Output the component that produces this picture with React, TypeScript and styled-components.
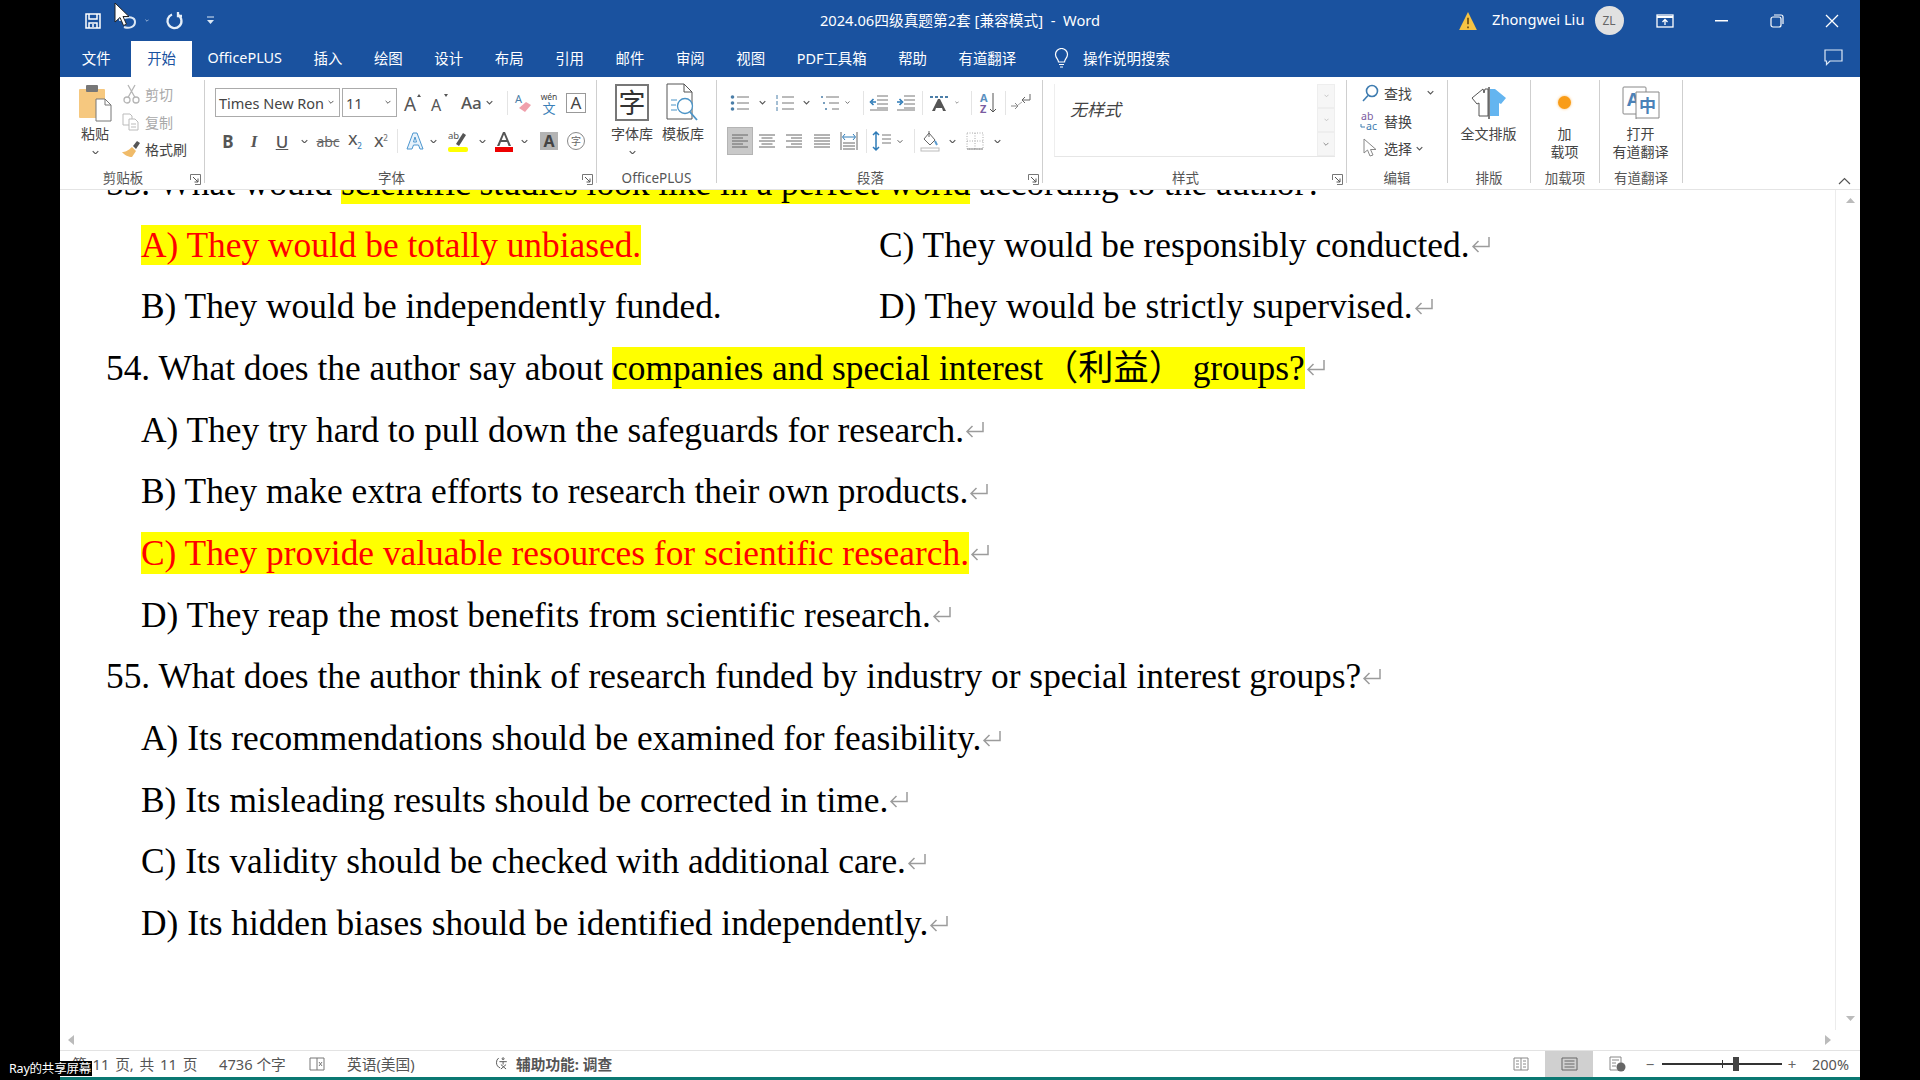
import React from "react";
import styled, { createGlobalStyle } from "styled-components";

const Global = createGlobalStyle`
  html, body { margin: 0; padding: 0; background: #000; }
  * { box-sizing: border-box; }
`;

const UI = `"Noto Sans", "Noto Sans CJK SC", sans-serif`;
const BLUE = "#1a529f";

const Screen = styled.div`
  position: relative; width: 1920px; height: 1080px; background: #000; padding: 0 60px;
  overflow: hidden; font-family: ${UI}; color: #444;
`;
const Win = styled.div`display: flex; flex-direction: column; width: 1800px; height: 1080px; background: #fff;`;

const TitleBar = styled.div`display: flex; align-items: center; height: 41px; background: ${BLUE}; color: #fff;`;
const Qat = styled.div`display: flex; align-items: center; width: 400px; padding-left: 15px;`;
const Title = styled.div`flex: 1; text-align: center; font-size: 14.7px; white-space: nowrap; padding-bottom: 3px;`;
const WinRight = styled.div`display: flex; align-items: center; width: 404px; margin-left: -4px; justify-content: flex-end;`;
const Cell = styled.div<{ $w: number; $h?: number }>`
  display: flex; align-items: center; justify-content: center; flex: none;
  width: ${p => p.$w}px; height: ${p => p.$h ?? 26}px;
`;
const Who = styled.div`font-size: 14.7px; white-space: nowrap; width: 114.5px; padding-left: 12px; padding-bottom: 3px;`;
const Avatar = styled.div`
  width: 29px; height: 29px; border-radius: 50%; background: #e1e1e1; color: #666; font-size: 12px;
  display: flex; align-items: center; justify-content: center; flex: none; margin-right: 18.5px;
`;

const TabBar = styled.div`display: flex; align-items: stretch; height: 36px; background: ${BLUE}; color: #fff; padding-left: 6px;`;
const Tab = styled.div<{ $on?: boolean; $gap?: number }>`
  display: flex; align-items: center; padding: 0 15.8px 3px; font-size: 14.4px; white-space: nowrap;
  margin-right: ${p => p.$gap ?? 0}px;
  background: ${p => (p.$on ? "#fff" : "transparent")};
  color: ${p => (p.$on ? BLUE : "#fff")};
`;
const Search = styled.div`display: flex; align-items: center; gap: 14px; margin-left: 22px; padding-bottom: 3px; font-size: 14.5px;`;
const TabEnd = styled.div`margin-left: auto; width: 36px; display: flex; align-items: center; padding-bottom: 3px;`;

const Ribbon = styled.div`
  display: flex; height: 113px; padding: 3px 0 6px; background: #fff; border-bottom: 1px solid #e4e4e4; position: relative; z-index: 2;
`;
const Group = styled.div<{ $w: number }>`
  display: flex; flex-direction: column; flex: none; width: ${p => p.$w}px; border-right: 1.5px solid #cfcfcf;
`;
const Body = styled.div<{ $pl?: number }>`display: flex; height: 90px; padding-left: ${p => p.$pl ?? 0}px;`;
const Stack = styled.div<{ $pl?: number; $pt?: number; $ml?: number; $mt?: number }>`
  display: flex; flex-direction: column; padding-left: ${p => p.$pl ?? 0}px; padding-top: ${p => p.$pt ?? 0}px;
  margin-left: ${p => p.$ml ?? 0}px; margin-top: ${p => p.$mt ?? 0}px;
`;
const GLabel = styled.div`display: flex; height: 13px; font-size: 13.5px; line-height: 16px; color: #555; align-items: center;`;
const GText = styled.div`flex: 1; text-align: center; white-space: nowrap; margin-top: 2px;`;
const Launch = styled.div`width: 18px; display: flex; justify-content: center; margin-top: 5px;`;

const Big = styled.div<{ $w: number }>`
  display: flex; flex-direction: column; align-items: center; flex: none; width: ${p => p.$w}px;
  font-size: 14px; line-height: 18px; color: #444; white-space: nowrap; text-align: center;
`;
const BigIcon = styled.div`height: 45px; display: flex; align-items: center; justify-content: center;`;
const ChevLine = styled.div`height: 18px; display: flex; align-items: center;`;
const Small = styled.div<{ $off?: boolean }>`
  display: flex; align-items: center; height: 27.7px; font-size: 14px; white-space: nowrap; gap: 4px;
  color: ${p => (p.$off ? "#a9a9a9" : "#444")};
`;
const SmallIco = styled.div`width: 20px; display: flex; justify-content: center; flex: none;`;

const Row = styled.div<{ $h: number; $pl?: number }>`
  display: flex; align-items: center; height: ${p => p.$h}px; padding-left: ${p => p.$pl ?? 0}px;
`;
const Combo = styled.div<{ $w: number }>`
  display: flex; align-items: center; justify-content: space-between; flex: none; width: ${p => p.$w}px; height: 29px;
  border: 1px solid #ababab; padding: 0 5px 0 3px; font-size: 14.5px; color: #444; margin-right: 2px; white-space: nowrap; overflow: hidden;
`;
const TB = styled.span<{ $b?: boolean; $i?: boolean; $u?: boolean; $s?: number }>`
  font-family: ${p => (p.$i ? `"Liberation Serif", serif` : UI)};
  font-weight: ${p => (p.$b || p.$i ? 700 : 500)}; font-style: ${p => (p.$i ? "italic" : "normal")};
  text-decoration: ${p => (p.$u ? "underline" : "none")}; font-size: ${p => p.$s ?? 16}px; color: #555; line-height: 1;
`;
const Sup = styled.sup`font-size: 8px; color: #777;`;
const Sub = styled.sub`font-size: 8px; color: #3a7fb8;`;
const Sep = styled.div<{ $ml?: number; $mr?: number }>`
  width: 1px; height: 24px; background: #e4e4e4; flex: none; margin-left: ${p => p.$ml ?? 0}px; margin-right: ${p => p.$mr ?? 0}px;
`;
const Pressed = styled(Cell)`background: #c9c9c9; border: 1px solid #b4b4b4;`;

const Gallery = styled.div`
  display: flex; width: 281px; height: 73px; margin-top: 4px; border-bottom: 1px solid #e6e6e6; border-left: 1px solid #eee;
`;
const Style0 = styled.div`flex: 1; padding: 12px 0 0 15px; font-size: 17px; font-style: italic; color: #444;`;
const Scroller = styled.div`width: 18px; display: flex; flex-direction: column; background: #f6f6f6;`;
const ScrollCell = styled.div`flex: 1; display: flex; align-items: center; justify-content: center; border: 1px solid #eee; color: #aaa;`;
const Collapse = styled.div`margin-left: auto; margin-top: 97px; width: 22px; display: flex; justify-content: flex-start;`;

const Doc = styled.div`flex: 1; display: flex; overflow: hidden; min-height: 0;`;
const Page = styled.div`
  flex: 1; overflow: hidden; padding-left: 46px;
  font-family: "Liberation Serif", serif; font-size: 35.37px; color: #000; white-space: nowrap;
`;
const Line = styled.div<{ $opt?: boolean; $first?: boolean }>`
  display: flex; align-items: center; height: 61.7px; padding-left: ${p => (p.$opt ? 35 : 0)}px;
  margin-top: ${p => (p.$first ? -38 : 0)}px;
`;
const Col = styled.div`width: 738px; flex: none;`;
const Mark = styled.mark`background: #ff0; color: inherit;`;
const Red = styled.mark`background: #ff0; color: #f00;`;
const Cjk = styled.span`font-family: "Noto Sans CJK SC", serif; font-size: 35.2px; line-height: 1;`;
const RetSvg = styled.svg`flex: none; margin-left: 1px;`;
const Ret = () => (
  <RetSvg width="19" height="17" viewBox="0 0 19 17" fill="none" stroke="#9c9c9c" strokeWidth="1.500">
    <path d="M18 1v9.500H2M7.500 5L2 10.500 7.500 16" />
  </RetSvg>
);
const VBar = styled.div`
  width: 25px; display: flex; flex-direction: column; justify-content: space-between; align-items: center;
  border-left: 1px solid #ececec; padding: 7px 0 5px 4px;
`;
const HBar = styled.div`display: flex; align-items: center; justify-content: space-between; height: 20px; padding: 0 27px 0 7px;`;
const Status = styled.div`
  display: flex; align-items: center; height: 27px; border-top: 1px solid #e3e3e3; font-size: 14.7px; color: #555; padding: 0 0 1px 12px; white-space: nowrap;
`;
const StatText = styled.span<{ $w?: number; $b?: boolean; $pl?: number; $ws?: number }>`
  flex: none; width: ${p => (p.$w ? p.$w + "px" : "auto")}; font-weight: ${p => (p.$b ? 700 : 400)}; padding: 0 0 1px ${p => p.$pl ?? 0}px;
  word-spacing: ${p => p.$ws ?? 0}px;
`;
const Spacer = styled.div`flex: 1;`;
const ViewOn = styled(Cell)`background: #d0d0d0;`;
const Zoom = styled.div`display: flex; align-items: center; width: 120px; height: 2px; background: #333; position: relative; flex: none; margin: 0 1px 0 3px;`;
const ZoomTick = styled.div`position: absolute; left: 60px; top: -3px; width: 1px; height: 8px; background: #333;`;
const ZoomThumb = styled.div`position: absolute; left: 71px; top: -6px; width: 6px; height: 14px; background: #444;`;
const ZoomMark = styled.span`width: 18px; text-align: center; font-size: 15px; flex: none; color: #666;`;
const Pct = styled.span`width: 59px; padding-left: 11px; font-size: 14.5px;`;
const Teal = styled.div`height: 3px; background: #0b7872;`;
const Badge = styled.div`
  position: absolute; left: 0; top: 1061px; width: 92px; height: 15px; background: #000; color: #fff; font-size: 12.5px;
  line-height: 15px; padding-left: 9px; white-space: nowrap; letter-spacing: -0.2px;
`;
const Pointer = styled.svg`position: absolute; left: 114px; top: 2px;`;

const Chev = ({ c = "#555", s = 7 }: { c?: string; s?: number }) => (
  <svg width={s} height={s * 0.7} viewBox="0 0 10 7"><path d="M1 1.5l4 4 4-4" fill="none" stroke={c} strokeWidth="1.6" /></svg>
);
const Launcher = () => (
  <svg width="11" height="11" viewBox="0 0 11 11"><path d="M.5 6V.5H10.5V10.5H5" fill="none" stroke="#777" /><path d="M3 3l5 5M8 4.5V8H4.5" fill="none" stroke="#555" /></svg>
);
const Lines = ({ kind }: { kind: "l" | "c" | "r" | "j" }) => {
  const w = [16, 11, 16, 11, 16];
  return (
    <svg width="18" height="16" viewBox="0 0 18 16">
      {w.map((x, i) => {
        const len = kind === "j" ? 16 : x;
        const sx = kind === "l" || kind === "j" ? 1 : kind === "c" ? 9 - len / 2 : 17 - len;
        return <path key={i} d={`M${sx} ${2 + i * 3}h${len}`} stroke="#666" />;
      })}
    </svg>
  );
};
const List = ({ mark }: { mark: "dot" | "num" | "multi" }) => (
  <svg width="20" height="18" viewBox="0 0 20 18">
    {[3, 9, 15].map((y, i) => (
      <g key={y}>
        {mark === "dot" && <circle cx="2.5" cy={y} r="1.8" fill="#4b7ea8" />}
        {mark === "num" && <path d={`M2 ${y - 2}v4`} stroke="#4b7ea8" />}
        {mark === "multi" && <circle cx={2 + i * 2} cy={y} r="1" fill="#4b7ea8" />}
        <path d={`M${mark === "multi" ? 6 + i * 3 : 7} ${y}H19`} stroke="#777" />
      </g>
    ))}
  </svg>
);
const Indent = ({ flip }: { flip?: boolean }) => (
  <svg width="20" height="18" viewBox="0 0 20 18">
    {[2, 6, 10, 14].map(y => <path key={y} d={`M8 ${y}H19`} stroke="#777" />)}
    <path d="M1 16H19" stroke="#777" />
    <path d={flip ? "M1 8h4M3.5 5l3 3-3 3" : "M7 8H3M4.5 5l-3 3 3 3"} fill="none" stroke="#2f7cb8" strokeWidth="1.6" />
  </svg>
);

const Paste = () => (
  <svg width="34" height="38" viewBox="0 0 34 38">
    <rect x="1" y="5" width="26" height="29" rx="1" fill="#f6c87f" />
    <rect x="8" y="1" width="12" height="7" rx="1" fill="#777" />
    <path d="M18 15h9l6 6v16H18z" fill="#fff" stroke="#777" />
    <path d="M27 15v6h6" fill="none" stroke="#777" />
  </svg>
);
const Scissors = () => (
  <svg width="17" height="20" viewBox="0 0 17 20" fill="none" stroke="#b5b5b5" strokeWidth="1.3">
    <circle cx="4" cy="16" r="3" /><circle cx="13" cy="16" r="3" /><path d="M5 13.5L12 1M12 13.5L5 1" />
  </svg>
);
const CopyIco = () => (
  <svg width="18" height="18" viewBox="0 0 18 18" fill="none" stroke="#bbb"><path d="M1 1h7l2 2v9H1z" /><path d="M7 6h6l3 3v8H7z" fill="#fff" /><path d="M9 11h5M9 14h5" /></svg>
);
const Brush = () => (
  <svg width="20" height="18" viewBox="0 0 20 18"><path d="M11 7l4 4-4 6c-3 0-8-2-10-5 3 0 6-1 10-5z" fill="#f0bb69" /><path d="M12 6l4-5 3 2-4 6z" fill="#555" /></svg>
);
const Eraser = () => (
  <svg width="18" height="20" viewBox="0 0 18 20"><text x="1" y="10" fontSize="11" fill="#4b7ea8" fontFamily="Noto Sans">A</text><path d="M5 15l7-6 5 3-6 7z" fill="#f0a0ac" /></svg>
);
const Wen = () => (
  <svg width="20" height="24" viewBox="0 0 20 24"><text x="10" y="9" fontSize="8.5" fill="#444" textAnchor="middle" fontFamily="Noto Sans">wén</text><text x="10" y="22" fontSize="13" fill="#3a7fb8" textAnchor="middle" fontFamily="Noto Sans CJK SC">文</text></svg>
);
const BoxA = styled.div`
  width: 20px; height: 20px; border: 1px solid #999; font-size: 17px; line-height: 18px; text-align: center; color: #444;
`;
const ABig = ({ up }: { up?: boolean }) => (
  <svg width="19" height="20" viewBox="0 0 19 20">
    <text x="1" y="18" fontSize={up ? 19 : 16} fill="#555" fontFamily="Noto Sans">A</text>
    <path d={up ? "M14 4l2-3 2 3z" : "M14 1l2 3 2-3z"} fill="#555" />
  </svg>
);
const Strike = styled.span`font-size: 14px; color: #666; text-decoration: line-through;`;
const AOutline = () => (
  <svg width="18" height="20" viewBox="0 0 18 20"><path d="M1 18L7 2h4l6 16h-3l-1.5-4h-5L6 18zM7.5 11h3L9 6z" fill="#e7f2fb" stroke="#4c96cf" /></svg>
);
const Highlight = () => (
  <svg width="20" height="22" viewBox="0 0 20 22">
    <text x="0" y="9" fontSize="9.5" fill="#555" fontFamily="Noto Sans">ab</text>
    <path d="M8 14l7-11 3 2-7 11z" fill="#555" /><rect x="0" y="17" width="20" height="5" rx="2" fill="#ff0" />
  </svg>
);
const FontColor = () => (
  <svg width="20" height="21" viewBox="0 0 20 21">
    <path d="M3 15L9 1h2l6 14h-2.400l-1.500-4H6.900l-1.500 4zM7.700 9h4.600L10 3.500z" fill="#555" /><rect x="1" y="16" width="18" height="5" fill="#e00" />
  </svg>
);
const AShade = styled.div`width: 18px; height: 18px; background: #b4b4b4; color: #444; font-weight: 700; font-size: 16px; line-height: 18px; text-align: center;`;
const CircleChar = styled.div`
  width: 18px; height: 18px; border: 1px solid #888; border-radius: 50%; font-size: 10px; line-height: 16px; text-align: center; color: #666; flex: none;
`;
const ZiBox = styled.div`
  width: 34px; height: 37px; border: 2px solid #777; background: #fff; font-size: 27px; line-height: 32px; text-align: center; color: #333;
  font-family: "Noto Sans CJK SC", serif;
`;
const Tmpl = () => (
  <svg width="36" height="39" viewBox="0 0 36 39" fill="none">
    <path d="M2 1h17l8 8v27H2z" stroke="#555" fill="#fff" /><path d="M19 1v8h8" stroke="#555" />
    <circle cx="20" cy="23" r="7.500" stroke="#4b94c7" strokeWidth="1.300" fill="#fff" />
    <path d="M25 29l7 8" stroke="#4b94c7" strokeWidth="1.800" />
    <path d="M6 17h6M6 22h5M6 27h6" stroke="#4b94c7" />
  </svg>
);
const Dir = () => (
  <svg width="22" height="18" viewBox="0 0 22 18"><path d="M2 3h18" stroke="#4b7ea8" strokeDasharray="3 2" strokeWidth="2" /><path d="M4 17L10 5h2l6 12h-3l-1-3H8l-1 3z" fill="#555" /></svg>
);
const Sort = () => (
  <svg width="20" height="24" viewBox="0 0 20 24">
    <text x="1" y="11" fontSize="11" fontWeight="700" fill="#5a8fc0" fontFamily="Noto Sans">A</text>
    <text x="1" y="22" fontSize="11" fontWeight="700" fill="#7a5ca0" fontFamily="Noto Sans">Z</text>
    <path d="M14 2v19M11 18l3 3 3-3" fill="none" stroke="#555" />
  </svg>
);
const Rtl = () => (
  <svg width="22" height="20" viewBox="0 0 22 20" fill="none"><path d="M20 1v6H12M15 4l-3 3 3 3" stroke="#666" /><path d="M1 13h6M5 10l3 3-3 3" stroke="#888" /><path d="M8 12l4-3" stroke="#aaa" /></svg>
);
const Dist = () => (
  <svg width="18" height="20" viewBox="0 0 18 20"><path d="M1 1v18M17 1v18M3 12h12M3 15h12M3 18h12" stroke="#666" /><path d="M3 6h12M5 3L2.500 6 5 9M13 3l2.500 3L13 9" fill="none" stroke="#2f7cb8" /></svg>
);
const Spacing = () => (
  <svg width="20" height="22" viewBox="0 0 20 22"><path d="M4 2v18M1 5l3-3 3 3M1 17l3 3 3-3" fill="none" stroke="#2f7cb8" strokeWidth="1.500" /><path d="M10 5h9M10 9h9M10 13h9" stroke="#777" /></svg>
);
const Bucket = () => (
  <svg width="20" height="22" viewBox="0 0 20 22"><path d="M9 3l6 7-5 5-6-6z" fill="#fff" stroke="#666" /><path d="M9 1v6" stroke="#666" /><path d="M15 11l2 4" stroke="#5a9bd0" strokeWidth="2" /><rect x="1" y="18" width="18" height="3" fill="#fff" stroke="#bbb" /></svg>
);
const Borders = () => (
  <svg width="18" height="18" viewBox="0 0 18 18"><rect x="1" y="1" width="16" height="16" fill="none" stroke="#aaa" strokeDasharray="1 1.500" /><path d="M9 1v16M1 9h16" stroke="#aaa" strokeDasharray="1 1.500" /><path d="M1 17h16" stroke="#888" /></svg>
);
const Loupe = () => (
  <svg width="17" height="18" viewBox="0 0 17 18" fill="none" stroke="#3e7cb0" strokeWidth="1.600"><circle cx="10" cy="7" r="5.500" /><path d="M6 11.500L1 17" /></svg>
);
const Replace = () => (
  <svg width="20" height="20" viewBox="0 0 20 20">
    <text x="1" y="9" fontSize="10.500" fill="#7a5ca0" fontFamily="Noto Sans">ab</text>
    <text x="6" y="19" fontSize="10.500" fill="#3e7cb0" fontFamily="Noto Sans">ac</text>
    <path d="M1 13v3h4" fill="none" stroke="#3e7cb0" />
  </svg>
);
const SelectIco = () => (
  <svg width="14" height="20" viewBox="0 0 14 20"><path d="M1 1v14l3.500-3L7 18l3-1-2.500-5.500H13z" fill="#fff" stroke="#888" /></svg>
);
const Shirt = () => (
  <svg width="36" height="32" viewBox="0 0 36 32">
    <path d="M12 2L1 11l5 6 2-1v13h9V2h-3l-1 4z" fill="#fff" stroke="#555" />
    <path d="M24 2L35 11l-5 6-2-1v13h-9V2z" fill="#64b5f0" />
    <path d="M18 0v32" stroke="#555" strokeWidth="1.500" />
  </svg>
);
const Dot = styled.div`width: 13px; height: 13px; border-radius: 50%; background: #f99c17; box-shadow: 0 0 3px #fbbe6a;`;
const Trans = () => (
  <svg width="38" height="34" viewBox="0 0 38 34">
    <rect x="1" y="1" width="23" height="27" rx="1" fill="#fff" stroke="#888" />
    <text x="5" y="20" fontSize="18" fontWeight="700" fill="#4b82b8" fontFamily="Noto Sans">A</text>
    <path d="M14 33V6h23v26H14" fill="#fff" stroke="#888" />
    <text x="25.500" y="26" fontSize="17" fontWeight="700" fill="#4b82b8" textAnchor="middle" fontFamily="Noto Sans CJK SC">中</text>
  </svg>
);

const Arrow = ({ d }: { d: "u" | "d" | "l" | "r" }) => {
  const p = { u: "M0 6h9L4.500 1z", d: "M0 1h9L4.500 6z", l: "M7 0v10L1 5z", r: "M1 0v10l6-5z" }[d];
  return <svg width="9" height="10" viewBox="0 0 9 10"><path d={p} fill="#bbb" /></svg>;
};

export default function App() {
  return (
    <Screen>
      <Global />
      <Win>
        <TitleBar>
          <Qat>
            <Cell $w={36}>
              <svg width="18" height="18" viewBox="0 0 18 18" fill="none" stroke="#fff" strokeWidth="1.500"><path d="M2 2h14v14H2z" /><path d="M5 2v5h8V2M5 16v-5h8v5" /><path d="M9 12v3" /></svg>
            </Cell>
            <Cell $w={34}>
              <svg width="20" height="16" viewBox="0 0 20 16" fill="none" stroke="#dce8f5" strokeWidth="2"><path d="M6 14c5 2 11 0 11-5S11 3 4 6" /><path d="M2 2v5h5" /></svg>
            </Cell>
            <Cell $w={4}><Chev c="#dce8f5" /></Cell>
            <Cell $w={50}>
              <svg width="20" height="20" viewBox="0 0 20 20" fill="none" stroke="#e6eff8" strokeWidth="2.300"><path d="M8 3.500a7 7 0 1 0 6 .5" /><path d="M14 1v4h4" /></svg>
            </Cell>
            <Cell $w={22}>
              <svg width="9" height="9" viewBox="0 0 9 9"><path d="M1 1h7" stroke="#dce8f5" /><path d="M1 4h7L4.500 8z" fill="#dce8f5" /></svg>
            </Cell>
          </Qat>
          <Title>2024.06四级真题第2套 [兼容模式]&nbsp; -&nbsp; Word</Title>
          <WinRight>
            <Cell $w={24}>
              <svg width="20" height="20" viewBox="0 0 18 18"><path d="M9 1L17 17H1z" fill="#f6c343" /><path d="M9 6v6M9 14v1.500" stroke="#6a4b10" strokeWidth="1.500" /></svg>
            </Cell>
            <Who>Zhongwei Liu</Who>
            <Avatar>ZL</Avatar>
            <Cell $w={46}>
              <svg width="18" height="14" viewBox="0 0 18 14" fill="none" stroke="#fff" strokeWidth="1.300"><rect x="1" y="1" width="16" height="12" /><path d="M1 3h16" strokeWidth="2" /><path d="M9 11V6M6.500 8L9 5.500 11.500 8" /></svg>
            </Cell>
            <Cell $w={12} />
            <Cell $w={42}>
              <svg width="13" height="2"><rect width="13" height="1.500" fill="#fff" /></svg>
            </Cell>
            <Cell $w={70}>
              <svg width="14" height="14" viewBox="0 0 14 14" fill="none" stroke="#fff" strokeWidth="1.200"><rect x="1" y="3" width="10" height="10" rx="2" /><path d="M4 1h7a2 2 0 0 1 2 2v7" /></svg>
            </Cell>
            <Cell $w={40}>
              <svg width="14" height="14" viewBox="0 0 14 14" stroke="#fff" strokeWidth="1.300"><path d="M1 1l12 12M13 1L1 13" /></svg>
            </Cell>
            <Cell $w={8} />
          </WinRight>
        </TitleBar>

        <TabBar>
          <Tab $gap={5}>文件</Tab>
          <Tab $on>开始</Tab>
          <Tab>OfficePLUS</Tab>
          <Tab>插入</Tab>
          <Tab>绘图</Tab>
          <Tab>设计</Tab>
          <Tab>布局</Tab>
          <Tab>引用</Tab>
          <Tab>邮件</Tab>
          <Tab>审阅</Tab>
          <Tab>视图</Tab>
          <Tab>PDF工具箱</Tab>
          <Tab>帮助</Tab>
          <Tab>有道翻译</Tab>
          <Search>
            <svg width="15" height="20" viewBox="0 0 15 20" fill="none" stroke="#fff" strokeWidth="1.200"><path d="M4.500 14c0-3-3-4-3-7.500a6 6 0 0 1 12 0c0 3.500-3 4.500-3 7.500z" /><path d="M5 16.500h5M6 19h3" /></svg>
            操作说明搜索
          </Search>
          <TabEnd>
            <svg width="19" height="17" viewBox="0 0 19 17" fill="none" stroke="#dce8f5" strokeWidth="1.200"><path d="M1 1h17v11H6l-3.500 3.500V12H1z" /></svg>
          </TabEnd>
        </TabBar>

        <Ribbon>
          <Group $w={145}>
            <Body>
              <Big $w={70}>
                <BigIcon><Paste /></BigIcon>
                粘贴
                <ChevLine><Chev /></ChevLine>
              </Big>
              <Stack $ml={-9}>
                <Small $off><SmallIco><Scissors /></SmallIco>剪切</Small>
                <Small $off><SmallIco><CopyIco /></SmallIco>复制</Small>
                <Small><SmallIco><Brush /></SmallIco>格式刷</Small>
              </Stack>
            </Body>
            <GLabel><GText>剪贴板</GText><Launch><Launcher /></Launch></GLabel>
          </Group>

          <Group $w={392}>
            <Body>
              <Stack $pl={10} $pt={7}>
                <Row $h={31}>
                  <Combo $w={125}><span>Times New Ron</span><Chev s={6} /></Combo>
                  <Combo $w={55}><span>11</span><Chev s={6} /></Combo>
                  <Cell $w={27}><ABig up /></Cell>
                  <Cell $w={26}><ABig /></Cell>
                  <Cell $w={50}><TB $s={17}>Aa</TB>&nbsp;<Chev /></Cell>
                  <Sep $ml={5} />
                  <Cell $w={30}><Eraser /></Cell>
                  <Cell $w={22}><Wen /></Cell>
                  <Cell $w={32}><BoxA>A</BoxA></Cell>
                </Row>
                <Row $h={46}>
                  <Cell $w={26}><TB $b $s={17}>B</TB></Cell>
                  <Cell $w={26}><TB $i $s={17}>I</TB></Cell>
                  <Cell $w={30}><TB $u $s={17}>U</TB></Cell>
                  <Cell $w={14}><Chev /></Cell>
                  <Cell $w={34}><Strike>abc</Strike></Cell>
                  <Cell $w={20}><TB $s={15}>X<Sub>2</Sub></TB></Cell>
                  <Cell $w={32}><TB $s={15}>X<Sup>2</Sup></TB></Cell>
                  <Sep $mr={6} />
                  <Cell $w={22}><AOutline /></Cell>
                  <Cell $w={15}><Chev /></Cell>
                  <Cell $w={34}><Highlight /></Cell>
                  <Cell $w={14}><Chev /></Cell>
                  <Cell $w={30}><FontColor /></Cell>
                  <Cell $w={10}><Chev /></Cell>
                  <Cell $w={40}><AShade>A</AShade></Cell>
                  <Cell $w={14}><CircleChar>字</CircleChar></Cell>
                </Row>
              </Stack>
            </Body>
            <GLabel><GText>字体</GText><Launch><Launcher /></Launch></GLabel>
          </Group>

          <Group $w={120}>
            <Body $pl={8}>
              <Big $w={54}>
                <BigIcon><ZiBox>字</ZiBox></BigIcon>
                字体库
                <ChevLine><Chev /></ChevLine>
              </Big>
              <Big $w={48}>
                <BigIcon><Tmpl /></BigIcon>
                模板库
              </Big>
            </Body>
            <GLabel><GText>OfficePLUS</GText></GLabel>
          </Group>

          <Group $w={326}>
            <Body>
              <Stack $pl={10} $pt={7}>
                <Row $h={31} $pl={1}>
                  <Cell $w={24}><List mark="dot" /></Cell>
                  <Cell $w={21}><Chev /></Cell>
                  <Cell $w={24}><List mark="num" /></Cell>
                  <Cell $w={18}><Chev /></Cell>
                  <Cell $w={30}><List mark="multi" /></Cell>
                  <Cell $w={5}><Chev /></Cell>
                  <Sep $ml={13} />
                  <Cell $w={30}><Indent /></Cell>
                  <Cell $w={24}><Indent flip /></Cell>
                  <Sep $ml={4} />
                  <Cell $w={32}><Dir /></Cell>
                  <Cell $w={4}><Chev /></Cell>
                  <Sep $ml={12} />
                  <Cell $w={33}><Sort /></Cell>
                  <Sep />
                  <Cell $w={30}><Rtl /></Cell>
                </Row>
                <Row $h={46}>
                  <Pressed $w={26} $h={28}><Lines kind="l" /></Pressed>
                  <Cell $w={28}><Lines kind="c" /></Cell>
                  <Cell $w={26}><Lines kind="r" /></Cell>
                  <Cell $w={30}><Lines kind="j" /></Cell>
                  <Cell $w={24}><Dist /></Cell>
                  <Sep $ml={5} />
                  <Cell $w={30}><Spacing /></Cell>
                  <Cell $w={6}><Chev /></Cell>
                  <Sep $ml={11} />
                  <Cell $w={30}><Bucket /></Cell>
                  <Cell $w={14}><Chev /></Cell>
                  <Cell $w={32}><Borders /></Cell>
                  <Cell $w={12}><Chev /></Cell>
                </Row>
              </Stack>
            </Body>
            <GLabel><GText>段落</GText><Launch><Launcher /></Launch></GLabel>
          </Group>

          <Group $w={304}>
            <Body $pl={11}>
              <Gallery>
                <Style0>无样式</Style0>
                <Scroller>
                  <ScrollCell><Chev c="#bbb" s={5} /></ScrollCell>
                  <ScrollCell><Chev c="#bbb" s={5} /></ScrollCell>
                  <ScrollCell><Chev c="#888" s={6} /></ScrollCell>
                </Scroller>
              </Gallery>
            </Body>
            <GLabel><GText>样式</GText><Launch><Launcher /></Launch></GLabel>
          </Group>

          <Group $w={101}>
            <Body>
              <Stack $pl={13} $mt={-1}>
                <Small><SmallIco><Loupe /></SmallIco>查找&nbsp;&nbsp;&nbsp;<Chev /></Small>
                <Small><SmallIco><Replace /></SmallIco>替换</Small>
                <Small><SmallIco><SelectIco /></SmallIco>选择<Chev /></Small>
              </Stack>
            </Body>
            <GLabel><GText>编辑</GText></GLabel>
          </Group>

          <Group $w={83}>
            <Body>
              <Big $w={81}>
                <BigIcon><Shirt /></BigIcon>
                全文排版
              </Big>
            </Body>
            <GLabel><GText>排版</GText></GLabel>
          </Group>

          <Group $w={69}>
            <Body>
              <Big $w={67}>
                <BigIcon><Dot /></BigIcon>
                加<br />载项
              </Big>
            </Body>
            <GLabel><GText>加载项</GText></GLabel>
          </Group>

          <Group $w={83}>
            <Body>
              <Big $w={81}>
                <BigIcon><Trans /></BigIcon>
                打开<br />有道翻译
              </Big>
            </Body>
            <GLabel><GText>有道翻译</GText></GLabel>
          </Group>

          <Collapse>
            <svg width="13" height="8" viewBox="0 0 13 8" fill="none" stroke="#555" strokeWidth="1.200"><path d="M1 7l5.500-5.500L12 7" /></svg>
          </Collapse>
        </Ribbon>

        <Doc>
          <Page>
            <Line $first>53. What would&nbsp;<Mark>scientific studies look like in a perfect world</Mark>&nbsp;according to the author?</Line>
            <Line $opt>
              <Col><Red>A) They would be totally unbiased.</Red></Col>
              C) They would be responsibly conducted.<Ret />
            </Line>
            <Line $opt>
              <Col>B) They would be independently funded.</Col>
              D) They would be strictly supervised.<Ret />
            </Line>
            <Line>54. What does the author say about&nbsp;<Mark>companies and special interest<Cjk>（利益）</Cjk> groups?</Mark><Ret /></Line>
            <Line $opt>A) They try hard to pull down the safeguards for research.<Ret /></Line>
            <Line $opt>B) They make extra efforts to research their own products.<Ret /></Line>
            <Line $opt><Red>C) They provide valuable resources for scientific research.</Red><Ret /></Line>
            <Line $opt>D) They reap the most benefits from scientific research.<Ret /></Line>
            <Line>55. What does the author think of research funded by industry or special interest groups?<Ret /></Line>
            <Line $opt>A) Its recommendations should be examined for feasibility.<Ret /></Line>
            <Line $opt>B) Its misleading results should be corrected in time.<Ret /></Line>
            <Line $opt>C) Its validity should be checked with additional care.<Ret /></Line>
            <Line $opt>D) Its hidden biases should be identified independently.<Ret /></Line>
          </Page>
          <VBar><Arrow d="u" /><Arrow d="d" /></VBar>
        </Doc>
        <HBar><Arrow d="l" /><Arrow d="r" /></HBar>
        <Status>
          <StatText $w={147} $ws={2}>第 11 页, 共 11 页</StatText>
          <StatText $w={88}>4736 个字</StatText>
          <Cell $w={20}>
            <svg width="16" height="14" viewBox="0 0 16 14" fill="none" stroke="#777"><path d="M1 1h14v12H1zM8 1v12" /><path d="M10 5l3 4M13 5l-3 4" /></svg>
          </Cell>
          <StatText $w={168} $pl={20}>英语(美国)</StatText>
          <Cell $w={14}>
            <svg width="19" height="19" viewBox="0 0 19 19" fill="none" stroke="#555" strokeWidth="1.300"><path d="M5 2a7.500 7.500 0 0 0-3 6.500c0 3 2 6 5 7" /><circle cx="11" cy="3" r="1.300" /><path d="M6 7h10M11 7v4" /><path d="M8 17l7-6M8 11l7 6" /></svg>
          </Cell>
          <StatText $b $pl={7}>辅助功能: 调查</StatText>
          <Spacer />
          <Cell $w={30}>
            <svg width="16" height="14" viewBox="0 0 16 14" fill="none" stroke="#888"><path d="M1 1h14v12H1zM8 1v12M3 4h3M3 7h3M3 10h3M10 4h3M10 7h3M10 10h3" /></svg>
          </Cell>
          <Cell $w={9} />
          <ViewOn $w={48} $h={26}>
            <svg width="17" height="14" viewBox="0 0 17 14" fill="none" stroke="#666"><path d="M1 1h15v12H1zM3.500 4h10M3.500 7h10M3.500 10h10" /></svg>
          </ViewOn>
          <Cell $w={48}>
            <svg width="17" height="16" viewBox="0 0 17 16"><path d="M1 1h11v13H1zM3 4h7M3 7h4M3 10h4" fill="none" stroke="#888" /><circle cx="12" cy="11" r="4.500" fill="#666" /></svg>
          </Cell>
          <ZoomMark>−</ZoomMark>
          <Zoom><ZoomTick /><ZoomThumb /></Zoom>
          <ZoomMark>+</ZoomMark>
          <Pct>200%</Pct>
        </Status>
        <Teal />
      </Win>
      <Badge>Ray的共享屏幕</Badge>
      <Pointer width="17" height="25" viewBox="0 0 17 25">
        <path d="M1 1v19l5-4.500 3.500 8 3-1.300-3.500-7.700h6z" fill="#fff" stroke="#222" />
      </Pointer>
    </Screen>
  );
}
